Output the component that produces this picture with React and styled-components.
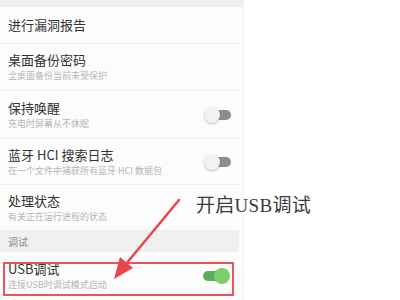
import React from 'react';
import styled, { createGlobalStyle } from 'styled-components';

const GlobalStyle = createGlobalStyle`
  html, body {
    margin: 0;
    padding: 0;
    background: #ffffff;
  }
  body {
    font-family: "Noto Sans CJK SC", "Noto Sans", sans-serif;
  }
`;

const Page = styled.div`
  position: relative;
  width: 400px;
  height: 300px;
  overflow: hidden;
  background: #ffffff;
`;

const Panel = styled.div`
  width: 243px;
  height: 300px;
  background: #fcfcfc;
  border-right: 1px solid #f0f0f0;
  display: flex;
  flex-direction: column;
`;

const TopBand = styled.div`
  height: 7px;
  background: #efefef;
  flex-shrink: 0;
`;

const Row = styled.div`
  position: relative;
  height: ${(p) => p.$h}px;
  flex-shrink: 0;
  display: flex;
  align-items: center;
  justify-content: space-between;
  padding: 0 8px 0 8px;
  margin: 0 4px 0 0;
  border-bottom: ${(p) => (p.$last ? 'none' : '1px solid #ececec')};
  box-sizing: border-box;

  ${(p) =>
    p.$marked &&
    `
    &::after {
      content: '';
      position: absolute;
      left: 3px;
      right: 5px;
      top: 10px;
      bottom: 4px;
      border: 2px solid #e8555a;
    }
  `}
`;

const Texts = styled.div`
  display: flex;
  flex-direction: column;
  gap: 2px;
`;

const Title = styled.div`
  font-size: 13px;
  line-height: 16px;
  color: #333333;
  font-weight: 400;
`;

const Sub = styled.div`
  font-size: 9px;
  line-height: 12px;
  color: #b5b5b5;
`;

const Section = styled.div`
  height: 22px;
  flex-shrink: 0;
  background: #f0f0f0;
  display: flex;
  align-items: center;
  padding-left: 8px;
  font-size: 10px;
  color: #8a8a8a;
  margin-right: 4px;
`;

const Track = styled.div`
  position: relative;
  width: 24px;
  height: 10px;
  border-radius: 5px;
  background: ${(p) => (p.$on ? '#5aae5a' : '#8c8c8c')};
  margin-right: ${(p) => (p.$on ? '4px' : '0')};
`;

const Knob = styled.div`
  position: absolute;
  top: -3px;
  ${(p) => (p.$on ? 'right: -3px;' : 'left: -3px;')}
  width: 16px;
  height: 16px;
  border-radius: 50%;
  background: ${(p) => (p.$on ? '#7ecf6c' : '#f2f2f2')};
  box-shadow: ${(p) => (p.$on ? 'none' : '0 1px 2px rgba(0,0,0,0.25)')};
`;

const Toggle = ({ on }) => (
  <Track $on={on}>
    <Knob $on={on} />
  </Track>
);

const Callout = styled.div`
  position: absolute;
  left: 196px;
  top: 190px;
  font-family: "Liberation Serif", "Noto Sans CJK SC", serif;
  font-size: 19px;
  color: #3a3a3a;
  letter-spacing: 0.3px;
`;

const Arrow = styled.svg`
  position: absolute;
  left: 0;
  top: 0;
  pointer-events: none;
`;

const rows = [
  { title: '桌面备份密码', sub: '全桌面备份当前未受保护', h: 47 },
  { title: '保持唤醒', sub: '充电时屏幕从不休眠', h: 48, toggle: true },
  { title: '蓝牙 HCI 搜索日志', sub: '在一个文件中捕获所有蓝牙 HCI 数据包', h: 46, toggle: true },
  { title: '处理状态', sub: '有关正在运行进程的状态', h: 45, last: true },
];

export default function App() {
  return (
    <Page>
      <GlobalStyle />
      <Panel>
        <TopBand />
        <Row $h={37}>
          <Title>进行漏洞报告</Title>
        </Row>
        {rows.map((r) => (
          <Row key={r.title} $h={r.h} $last={r.last}>
            <Texts>
              <Title>{r.title}</Title>
              <Sub>{r.sub}</Sub>
            </Texts>
            {r.toggle && <Toggle />}
          </Row>
        ))}
        <Section>调试</Section>
        <Row $h={48} $marked $last>
          <Texts>
            <Title>USB调试</Title>
            <Sub>连接USB时调试模式启动</Sub>
          </Texts>
          <Toggle on />
        </Row>
      </Panel>
      <Callout>开启USB调试</Callout>
      <Arrow width="400" height="300" viewBox="0 0 400 300">
        <line x1="179" y1="200" x2="126" y2="264" stroke="#e8454c" strokeWidth="2.5" strokeLinecap="round" />
        <polygon points="114,279 120,257 133,268" fill="#e8454c" />
      </Arrow>
    </Page>
  );
}
